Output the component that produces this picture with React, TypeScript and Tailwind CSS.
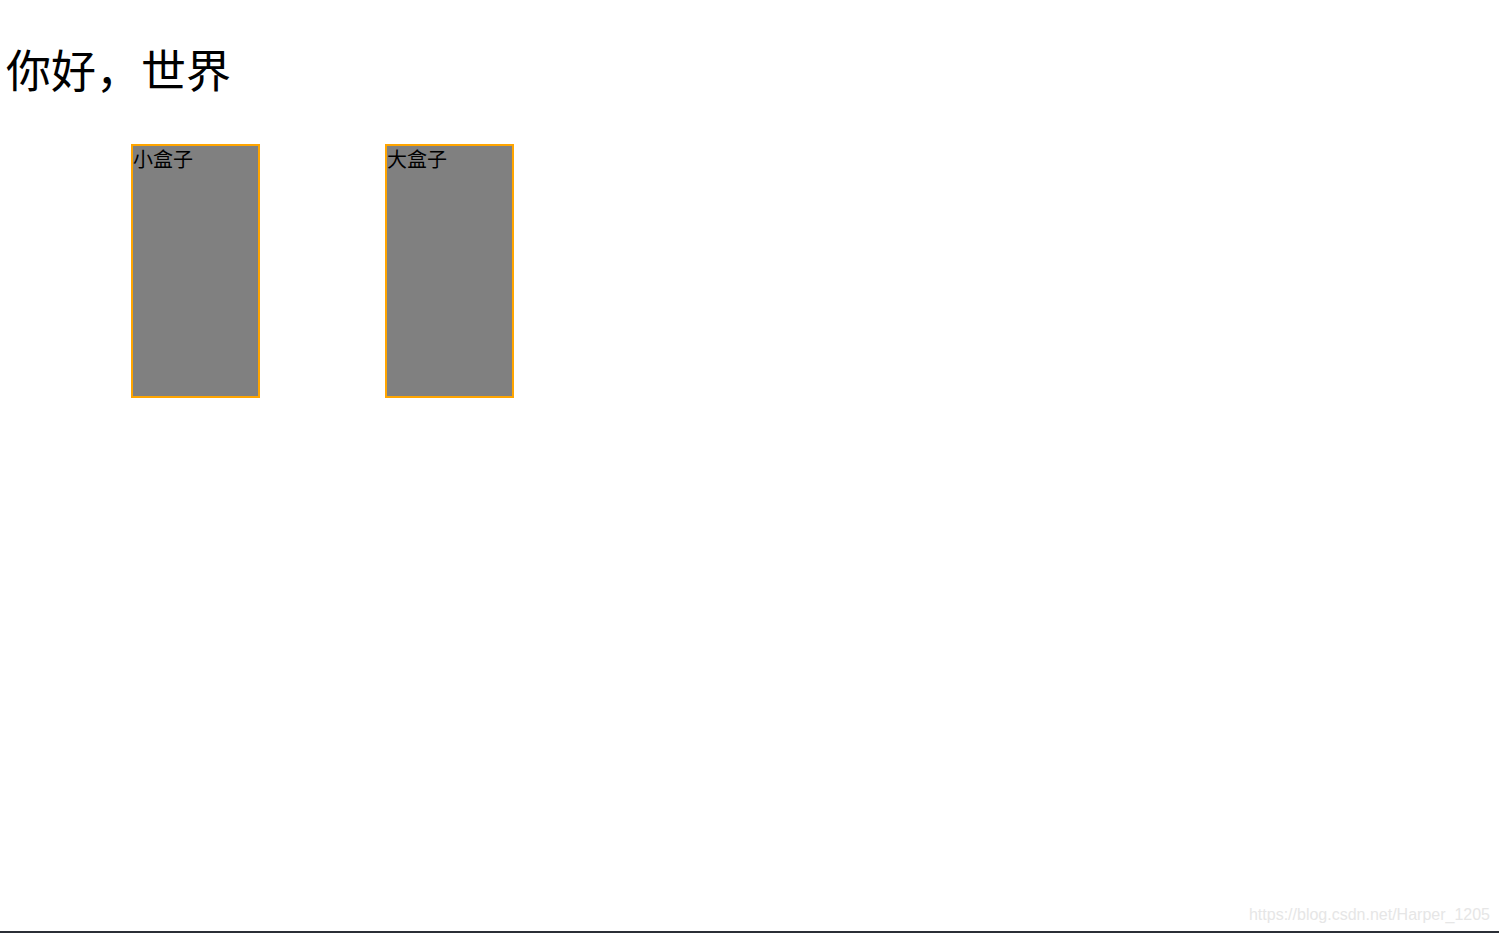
export default function App() {
  return (
    <div className="flex h-[933px] w-full flex-col bg-white font-['Microsoft_YaHei','Noto_Sans_CJK_SC',sans-serif] text-black">
      <h1 className="ml-[6px] mt-[41px] text-[45px] font-normal leading-[56px]">你好，世界</h1>

      <div className="ml-[131px] mt-[47px] flex gap-[125px]">
        <div className="h-[254px] w-[129px] border-2 border-[#ffa500] bg-[#808080] text-[20px] leading-[26px]">
          小盒子
        </div>
        <div className="h-[254px] w-[129px] border-2 border-[#ffa500] bg-[#808080] text-[20px] leading-[26px]">
          大盒子
        </div>
      </div>

      <div className="mt-auto flex justify-end pb-[6px] pr-[9px]">
        <span className="font-['Liberation_Sans',Arial,sans-serif] text-[16px] leading-[20px] text-[#e6e6e6]">
          https://blog.csdn.net/Harper_1205
        </span>
      </div>
      <div className="h-[2px] w-full bg-[#2b2f36]" />
    </div>
  );
}
